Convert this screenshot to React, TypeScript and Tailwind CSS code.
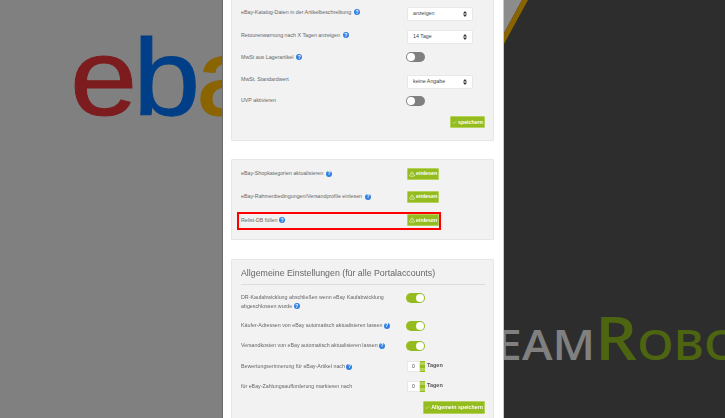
import React from 'react';
import { Check, TriangleAlert } from 'lucide-react';

const Help: React.FC = () => (
  <span className="inline-flex h-[6px] w-[6px] items-center justify-center rounded-full bg-[#2f80e0] align-middle text-[5px] font-bold leading-none text-white">
    ?
  </span>
);

const Select: React.FC<{ value: string }> = ({ value }) => (
  <div className="ml-[1px] flex h-[14px] w-[66px] items-center justify-between rounded-[1px] border border-[#e8e8e8] bg-white pl-[5px] pr-[5px] text-[5.3px] text-[#444]">
    <span>{value}</span>
    <svg width="4" height="6" viewBox="0 0 4 6">
      <polygon points="2,0 4,2.4 0,2.4" fill="#333" />
      <polygon points="0,3.6 4,3.6 2,6" fill="#333" />
    </svg>
  </div>
);

const Toggle: React.FC<{ on?: boolean }> = ({ on }) => (
  <div
    className={
      on
        ? 'flex h-[10px] w-[19px] items-center justify-end rounded-full bg-[#95bc1e] px-[1px]'
        : 'flex h-[10px] w-[19px] items-center justify-start rounded-full bg-[#808080] px-[1px]'
    }
  >
    <div className="h-[8px] w-[8px] rounded-full bg-white" />
  </div>
);

const GreenButton: React.FC<{ label: string; warn?: boolean; className?: string }> = ({
  label,
  warn,
  className = 'h-[12px]',
}) => (
  <button
    className={`flex items-center gap-[1px] whitespace-nowrap rounded-[1px] border border-[#b5d35c] bg-[#95bc1e] px-[1px] text-[5.3px] font-bold text-white ${className}`}
  >
    {warn ? <TriangleAlert size={6} strokeWidth={2} /> : <Check size={5} strokeWidth={2} />}
    <span className="mt-[1px]">{label}</span>
  </button>
);

const NumberInput: React.FC = () => (
  <div className="ml-[1px] flex items-center">
    <div className="flex h-[11px] w-[13px] items-center justify-center border border-[#e8e8e8] bg-white text-[5px] text-[#444]">
      0
    </div>
    <div className="flex h-[11px] w-[5px] flex-col justify-between bg-[#95bc1e] py-[1px]">
      <div className="h-[3px] bg-[#b5d35c]" />
      <div className="h-[3px] bg-[#b5d35c]" />
    </div>
    <span className="mb-[3px] ml-[2px] text-[5.5px] font-bold text-[#555]">Tagen</span>
  </div>
);

const Row: React.FC<{
  className: string;
  labelClass?: string;
  control?: React.ReactNode;
  children: React.ReactNode;
}> = ({ className, labelClass = '', control, children }) => (
  <div className={`flex ${className}`}>
    <div className={`w-[165px] shrink-0 text-[5.3px] leading-[8.5px] text-[#666] ${labelClass}`}>{children}</div>
    {control}
  </div>
);

const Panel: React.FC<{ className: string; children: React.ReactNode }> = ({ className, children }) => (
  <div className={`w-[263px] shrink-0 rounded-[1px] border border-[#e6e6e6] bg-[#f2f2f2] pl-[9px] pr-[8px] ${className}`}>
    {children}
  </div>
);

export default function App() {
  return (
    <div className="flex h-[418px] w-[725px] overflow-hidden bg-[#2d2d2d] font-['Liberation_Sans',Arial,sans-serif]">
      {/* backdrop left: ebay logo */}
      <div className="w-[223px] shrink-0 overflow-hidden border-r border-[#6a6a6a] bg-[#808080] pl-[70px] pt-[14px]">
        <div className="flex origin-left scale-x-[1.1] whitespace-nowrap text-[110px] leading-[126px] tracking-[-4px] [-webkit-text-stroke:1px_currentColor]">
          <span className="text-[#7c1c1e]">e</span>
          <span className="text-[#003f87]">b</span>
          <span className="text-[#8a6400]">a</span>
        </div>
      </div>

      {/* modal */}
      <div className="flex w-[280px] shrink-0 flex-col items-start bg-white pl-[8px] blur-[0.25px]">
        <Panel className="mt-[-10px] h-[151px] pt-[11px]">
          <Row className="h-[23px] items-center" labelClass="mb-[3px]" control={<Select value="anzeigen" />}>
            eBay-Katalog-Daten in der Artikelbeschreibung <span className="ml-[1.5px]"><Help /></span>
          </Row>
          <Row className="h-[23px] items-center" labelClass="mb-[3px]" control={<Select value="14 Tage" />}>
            Retourenwarnung nach X Tagen anzeigen <span className="ml-[1.5px]"><Help /></span>
          </Row>
          <Row className="h-[18px] items-center" control={<Toggle />}>
            MwSt aus Lagerartikel <span className="ml-[1.5px]"><Help /></span>
          </Row>
          <Row className="mt-[5px] h-[21px] items-center" labelClass="mb-[5px]" control={<Select value="keine Angabe" />}>
            MwSt. Standardwert
          </Row>
          <Row className="h-[17px] items-center" labelClass="mb-[1px]" control={<Toggle />}>
            UVP aktivieren
          </Row>
          <div className="mt-[7px] flex justify-end">
            <GreenButton label="speichern" />
          </div>
        </Panel>

        <Panel className="mt-[18px] h-[81px] pt-[2px]">
          <Row className="h-[23px] items-center" control={<div className="ml-[1px]"><GreenButton label="einlesen" warn /></div>}>
            eBay-Shopkategorien aktualisieren <span className="ml-[1.5px]"><Help /></span>
          </Row>
          <Row className="h-[23px] items-center" control={<div className="ml-[1px]"><GreenButton label="einlesen" warn /></div>}>
            eBay-Rahmenbedingungen/Versandprofile einlesen <span className="ml-[1.5px]"><Help /></span>
          </Row>
          <div className="ml-[-4px] mt-[4px] flex h-[18px] w-[204px] items-center border-2 border-[#f00] pb-[2px] pl-[2px]">
            <div className="w-[165px] shrink-0 text-[5.3px] leading-[8.5px] text-[#666]">
              Relist-DB füllen <Help />
            </div>
            <div className="ml-[1px]"><GreenButton label="einlesen" warn /></div>
          </div>
        </Panel>

        <Panel className="mt-[19px] h-[170px] pt-[6px]">
          <div className="border-b border-[#dcdcdc] pb-[4px] text-[8.8px] leading-[14px] text-[#666]">
            Allgemeine Einstellungen (für alle Portalaccounts)
          </div>
          <Row className="mt-[8px] h-[24px] items-start" control={<Toggle on />}>
            DR-Kaufabwicklung abschließen wenn eBay Kaufabwicklung
            <br />
            abgeschlossen wurde <Help />
          </Row>
          <Row className="h-[17px] items-center" control={<Toggle on />}>
            Käufer-Adressen von eBay automatisch aktualisieren lassen <Help />
          </Row>
          <Row className="h-[23px] items-center" control={<Toggle on />}>
            Versandkosten von eBay automatisch aktualisieren lassen <Help />
          </Row>
          <Row className="h-[19px] items-center" control={<NumberInput />}>
            Bewertungserinnerung für eBay-Artikel nach <Help />
          </Row>
          <Row className="h-[21px] items-center" control={<NumberInput />}>
            für eBay-Zahlungsaufforderung markieren nach
          </Row>
          <div className="mt-[4px] flex justify-end">
            <GreenButton label="Allgemein speichern" className="h-[13px]" />
          </div>
        </Panel>
      </div>

      {/* backdrop right: team robo logo */}
      <div className="relative flex-1 overflow-hidden border-l border-[#c8c8c8] bg-[#2d2d2d]">
        <svg className="absolute left-0 top-0" width="26" height="45" viewBox="0 0 26 45">
          <polygon points="0,0 18,0 0,33" fill="#8c8c8c" />
          <polygon points="18,0 24,0 0,44 0,33" fill="#8a6400" />
        </svg>
        <div className="ml-[-34px] mt-[307px] flex origin-left scale-x-[1.1] items-baseline whitespace-nowrap font-['Open_Sans',sans-serif] text-[42px] leading-[60px] font-semibold">
          <span className="text-[#808080]">TEAM</span>
          <span className="text-[60px] text-[#4d6410]">R</span>
          <span className="text-[#4d6410]">OBOT</span>
        </div>
      </div>
    </div>
  );
}
